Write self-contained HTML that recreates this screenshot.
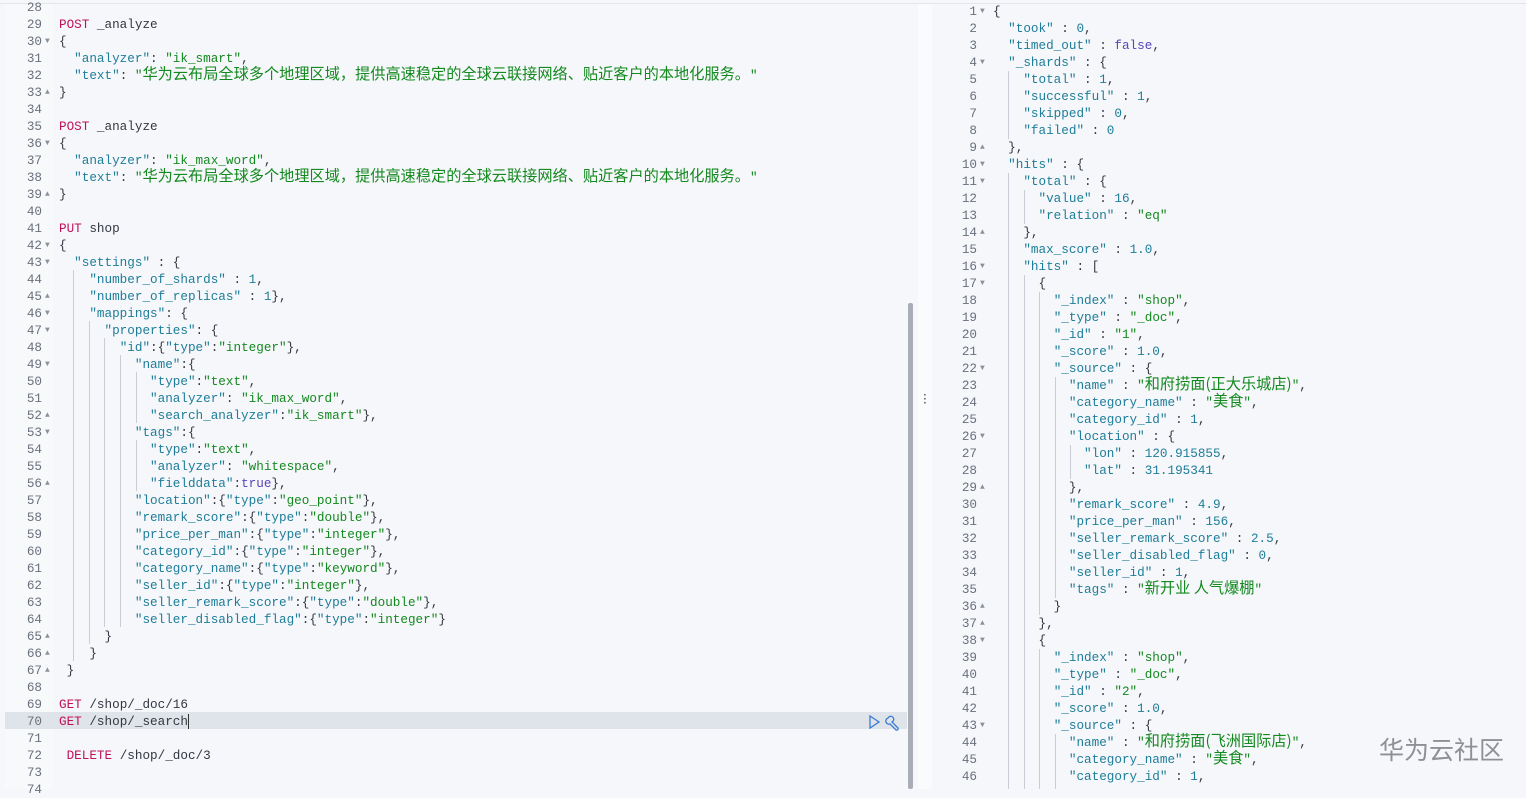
<!DOCTYPE html>
<html><head><meta charset="utf-8"><style>
body{margin:0;width:1526px;height:789px;background:#f5f7fa;overflow:hidden;position:relative;font-family:"Liberation Mono","Noto Sans CJK SC",monospace;font-size:12.65px;color:#343741}
.topline{position:absolute;left:0;top:3px;width:1526px;height:1px;background:#e3e6eb}
.pane{position:absolute;top:4px;bottom:0;background:#f5f7fa}
.l{position:absolute;height:17px;line-height:17px;white-space:pre;left:0;overflow:visible}
.n{position:absolute;width:42px;text-align:right;color:#69707d;height:17px;line-height:17px}
.f{position:absolute;color:#8a919c;font-size:8px;height:17px;line-height:17px}
.k{color:#1e7d99}.s{color:#14891f}.m{color:#c0125a}.v{color:#1e7d99}.b{color:#5a45b8}
.c{font-family:"Noto Sans CJK SC",sans-serif;font-size:15.2px;line-height:1px;vertical-align:baseline}
.g{position:absolute;width:1px;background:#c9ced6}
</style></head><body>
<div class="topline"></div>
<div class="pane" style="left:5px;width:913px;background:#f5f7fa"></div>
<div style="position:absolute;left:5px;top:4px;width:48px;bottom:0;background:#f8f9fb"></div>
<div style="position:absolute;left:5px;top:712px;width:902px;height:17px;background:#dfe4ea"></div>
<div style="position:absolute;left:908px;top:303px;width:5px;bottom:0;background:#a9aeb6;border-radius:2px"></div>
<div style="position:absolute;left:918px;top:4px;width:14px;bottom:0;background:#fafbfc"></div>
<div style="position:absolute;left:923px;top:393px;color:#343741;font-size:12px;line-height:4px;font-family:'DejaVu Sans'">·<br>·<br>·</div>
<div class="g" style="left:73px;top:270px;height:391px"></div>
<div class="g" style="left:89px;top:321px;height:323px"></div>
<div class="g" style="left:104px;top:338px;height:289px"></div>
<div class="g" style="left:120px;top:355px;height:272px"></div>
<div class="g" style="left:136px;top:372px;height:51px"></div>
<div class="g" style="left:136px;top:440px;height:51px"></div>
<div class="g" style="left:1008px;top:71px;height:68px"></div>
<div class="g" style="left:1008px;top:173px;height:616px"></div>
<div class="g" style="left:1024px;top:190px;height:34px"></div>
<div class="g" style="left:1024px;top:275px;height:514px"></div>
<div class="g" style="left:1039px;top:292px;height:323px"></div>
<div class="g" style="left:1039px;top:649px;height:140px"></div>
<div class="g" style="left:1055px;top:377px;height:221px"></div>
<div class="g" style="left:1055px;top:734px;height:55px"></div>
<div class="g" style="left:1070px;top:445px;height:34px"></div>

<div id="L" style="position:absolute;left:0;top:-1px">
<div class="n" style="top:0">28</div>
<div class="n" style="top:17px">29</div><div class="l" style="left:59px;top:17px"><span class="m">POST</span> _analyze</div>
<div class="n" style="top:34px">30</div><div class="f" style="left:45px;top:34px">▼</div><div class="l" style="left:59px;top:34px">{</div>
<div class="n" style="top:51px">31</div><div class="l" style="left:59px;top:51px">  <span class="k">"analyzer"</span>: <span class="s">"ik_smart"</span>,</div>
<div class="n" style="top:68px">32</div><div class="l" style="left:59px;top:68px">  <span class="k">"text"</span>: <span class="s">"<span class="c">华为云布局全球多个地理区域，提供高速稳定的全球云联接网络、贴近客户的本地化服务。</span>"</span></div>
<div class="n" style="top:85px">33</div><div class="f" style="left:45px;top:85px">▲</div><div class="l" style="left:59px;top:85px">}</div>
<div class="n" style="top:102px">34</div>
<div class="n" style="top:119px">35</div><div class="l" style="left:59px;top:119px"><span class="m">POST</span> _analyze</div>
<div class="n" style="top:136px">36</div><div class="f" style="left:45px;top:136px">▼</div><div class="l" style="left:59px;top:136px">{</div>
<div class="n" style="top:153px">37</div><div class="l" style="left:59px;top:153px">  <span class="k">"analyzer"</span>: <span class="s">"ik_max_word"</span>,</div>
<div class="n" style="top:170px">38</div><div class="l" style="left:59px;top:170px">  <span class="k">"text"</span>: <span class="s">"<span class="c">华为云布局全球多个地理区域，提供高速稳定的全球云联接网络、贴近客户的本地化服务。</span>"</span></div>
<div class="n" style="top:187px">39</div><div class="f" style="left:45px;top:187px">▲</div><div class="l" style="left:59px;top:187px">}</div>
<div class="n" style="top:204px">40</div>
<div class="n" style="top:221px">41</div><div class="l" style="left:59px;top:221px"><span class="m">PUT</span> shop</div>
<div class="n" style="top:238px">42</div><div class="f" style="left:45px;top:238px">▼</div><div class="l" style="left:59px;top:238px">{</div>
<div class="n" style="top:255px">43</div><div class="f" style="left:45px;top:255px">▼</div><div class="l" style="left:59px;top:255px">  <span class="k">"settings"</span> : {</div>
<div class="n" style="top:272px">44</div><div class="l" style="left:59px;top:272px">    <span class="k">"number_of_shards"</span> : <span class="v">1</span>,</div>
<div class="n" style="top:289px">45</div><div class="f" style="left:45px;top:289px">▲</div><div class="l" style="left:59px;top:289px">    <span class="k">"number_of_replicas"</span> : <span class="v">1</span>},</div>
<div class="n" style="top:306px">46</div><div class="f" style="left:45px;top:306px">▼</div><div class="l" style="left:59px;top:306px">    <span class="k">"mappings"</span>: {</div>
<div class="n" style="top:323px">47</div><div class="f" style="left:45px;top:323px">▼</div><div class="l" style="left:59px;top:323px">      <span class="k">"properties"</span>: {</div>
<div class="n" style="top:340px">48</div><div class="l" style="left:59px;top:340px">        <span class="k">"id"</span>:{<span class="k">"type"</span>:<span class="s">"integer"</span>},</div>
<div class="n" style="top:357px">49</div><div class="f" style="left:45px;top:357px">▼</div><div class="l" style="left:59px;top:357px">          <span class="k">"name"</span>:{</div>
<div class="n" style="top:374px">50</div><div class="l" style="left:59px;top:374px">            <span class="k">"type"</span>:<span class="s">"text"</span>,</div>
<div class="n" style="top:391px">51</div><div class="l" style="left:59px;top:391px">            <span class="k">"analyzer"</span>: <span class="s">"ik_max_word"</span>,</div>
<div class="n" style="top:408px">52</div><div class="f" style="left:45px;top:408px">▲</div><div class="l" style="left:59px;top:408px">            <span class="k">"search_analyzer"</span>:<span class="s">"ik_smart"</span>},</div>
<div class="n" style="top:425px">53</div><div class="f" style="left:45px;top:425px">▼</div><div class="l" style="left:59px;top:425px">          <span class="k">"tags"</span>:{</div>
<div class="n" style="top:442px">54</div><div class="l" style="left:59px;top:442px">            <span class="k">"type"</span>:<span class="s">"text"</span>,</div>
<div class="n" style="top:459px">55</div><div class="l" style="left:59px;top:459px">            <span class="k">"analyzer"</span>: <span class="s">"whitespace"</span>,</div>
<div class="n" style="top:476px">56</div><div class="f" style="left:45px;top:476px">▲</div><div class="l" style="left:59px;top:476px">            <span class="k">"fielddata"</span>:<span class="b">true</span>},</div>
<div class="n" style="top:493px">57</div><div class="l" style="left:59px;top:493px">          <span class="k">"location"</span>:{<span class="k">"type"</span>:<span class="s">"geo_point"</span>},</div>
<div class="n" style="top:510px">58</div><div class="l" style="left:59px;top:510px">          <span class="k">"remark_score"</span>:{<span class="k">"type"</span>:<span class="s">"double"</span>},</div>
<div class="n" style="top:527px">59</div><div class="l" style="left:59px;top:527px">          <span class="k">"price_per_man"</span>:{<span class="k">"type"</span>:<span class="s">"integer"</span>},</div>
<div class="n" style="top:544px">60</div><div class="l" style="left:59px;top:544px">          <span class="k">"category_id"</span>:{<span class="k">"type"</span>:<span class="s">"integer"</span>},</div>
<div class="n" style="top:561px">61</div><div class="l" style="left:59px;top:561px">          <span class="k">"category_name"</span>:{<span class="k">"type"</span>:<span class="s">"keyword"</span>},</div>
<div class="n" style="top:578px">62</div><div class="l" style="left:59px;top:578px">          <span class="k">"seller_id"</span>:{<span class="k">"type"</span>:<span class="s">"integer"</span>},</div>
<div class="n" style="top:595px">63</div><div class="l" style="left:59px;top:595px">          <span class="k">"seller_remark_score"</span>:{<span class="k">"type"</span>:<span class="s">"double"</span>},</div>
<div class="n" style="top:612px">64</div><div class="l" style="left:59px;top:612px">          <span class="k">"seller_disabled_flag"</span>:{<span class="k">"type"</span>:<span class="s">"integer"</span>}</div>
<div class="n" style="top:629px">65</div><div class="f" style="left:45px;top:629px">▲</div><div class="l" style="left:59px;top:629px">      }</div>
<div class="n" style="top:646px">66</div><div class="f" style="left:45px;top:646px">▲</div><div class="l" style="left:59px;top:646px">    }</div>
<div class="n" style="top:663px">67</div><div class="f" style="left:45px;top:663px">▲</div><div class="l" style="left:59px;top:663px"> }</div>
<div class="n" style="top:680px">68</div>
<div class="n" style="top:697px">69</div><div class="l" style="left:59px;top:697px"><span class="m">GET</span> /shop/_doc/16</div>
<div class="n" style="top:714px">70</div><div class="l" style="left:59px;top:714px"><span class="m">GET</span> /shop/_search<span style="border-left:1px solid #333"></span></div>
<div class="n" style="top:731px">71</div>
<div class="n" style="top:748px">72</div><div class="l" style="left:59px;top:748px"> <span class="m">DELETE</span> /shop/_doc/3</div>
<div class="n" style="top:765px">73</div>
<div class="n" style="top:782px">74</div>
</div>
<svg style="position:absolute;left:867px;top:714px" width="38" height="17" viewBox="0 0 38 17"><path d="M3 2 L12 8 L3 14 Z" fill="none" stroke="#3a7bd5" stroke-width="1.3"/><path d="M21 4 a3 3 0 1 1 4 4 l6 6 a1.5 1.5 0 0 1 -2 2 l-6 -6 a3 3 0 0 1 -2 -6z" fill="none" stroke="#3a7bd5" stroke-width="1.3"/></svg>

<div id="R" style="position:absolute;left:935px;top:3px">
<div class="n" style="top:0">1</div><div class="f" style="left:45px;top:0">▼</div><div class="l" style="left:58px;top:0">{</div>
<div class="n" style="top:17px">2</div><div class="l" style="left:58px;top:17px">  <span class="k">"took"</span> : <span class="v">0</span>,</div>
<div class="n" style="top:34px">3</div><div class="l" style="left:58px;top:34px">  <span class="k">"timed_out"</span> : <span class="b">false</span>,</div>
<div class="n" style="top:51px">4</div><div class="f" style="left:45px;top:51px">▼</div><div class="l" style="left:58px;top:51px">  <span class="k">"_shards"</span> : {</div>
<div class="n" style="top:68px">5</div><div class="l" style="left:58px;top:68px">    <span class="k">"total"</span> : <span class="v">1</span>,</div>
<div class="n" style="top:85px">6</div><div class="l" style="left:58px;top:85px">    <span class="k">"successful"</span> : <span class="v">1</span>,</div>
<div class="n" style="top:102px">7</div><div class="l" style="left:58px;top:102px">    <span class="k">"skipped"</span> : <span class="v">0</span>,</div>
<div class="n" style="top:119px">8</div><div class="l" style="left:58px;top:119px">    <span class="k">"failed"</span> : <span class="v">0</span></div>
<div class="n" style="top:136px">9</div><div class="f" style="left:45px;top:136px">▲</div><div class="l" style="left:58px;top:136px">  },</div>
<div class="n" style="top:153px">10</div><div class="f" style="left:45px;top:153px">▼</div><div class="l" style="left:58px;top:153px">  <span class="k">"hits"</span> : {</div>
<div class="n" style="top:170px">11</div><div class="f" style="left:45px;top:170px">▼</div><div class="l" style="left:58px;top:170px">    <span class="k">"total"</span> : {</div>
<div class="n" style="top:187px">12</div><div class="l" style="left:58px;top:187px">      <span class="k">"value"</span> : <span class="v">16</span>,</div>
<div class="n" style="top:204px">13</div><div class="l" style="left:58px;top:204px">      <span class="k">"relation"</span> : <span class="s">"eq"</span></div>
<div class="n" style="top:221px">14</div><div class="f" style="left:45px;top:221px">▲</div><div class="l" style="left:58px;top:221px">    },</div>
<div class="n" style="top:238px">15</div><div class="l" style="left:58px;top:238px">    <span class="k">"max_score"</span> : <span class="v">1.0</span>,</div>
<div class="n" style="top:255px">16</div><div class="f" style="left:45px;top:255px">▼</div><div class="l" style="left:58px;top:255px">    <span class="k">"hits"</span> : [</div>
<div class="n" style="top:272px">17</div><div class="f" style="left:45px;top:272px">▼</div><div class="l" style="left:58px;top:272px">      {</div>
<div class="n" style="top:289px">18</div><div class="l" style="left:58px;top:289px">        <span class="k">"_index"</span> : <span class="s">"shop"</span>,</div>
<div class="n" style="top:306px">19</div><div class="l" style="left:58px;top:306px">        <span class="k">"_type"</span> : <span class="s">"_doc"</span>,</div>
<div class="n" style="top:323px">20</div><div class="l" style="left:58px;top:323px">        <span class="k">"_id"</span> : <span class="s">"1"</span>,</div>
<div class="n" style="top:340px">21</div><div class="l" style="left:58px;top:340px">        <span class="k">"_score"</span> : <span class="v">1.0</span>,</div>
<div class="n" style="top:357px">22</div><div class="f" style="left:45px;top:357px">▼</div><div class="l" style="left:58px;top:357px">        <span class="k">"_source"</span> : {</div>
<div class="n" style="top:374px">23</div><div class="l" style="left:58px;top:374px">          <span class="k">"name"</span> : <span class="s">"<span class="c">和府捞面(正大乐城店)</span>"</span>,</div>
<div class="n" style="top:391px">24</div><div class="l" style="left:58px;top:391px">          <span class="k">"category_name"</span> : <span class="s">"<span class="c">美食</span>"</span>,</div>
<div class="n" style="top:408px">25</div><div class="l" style="left:58px;top:408px">          <span class="k">"category_id"</span> : <span class="v">1</span>,</div>
<div class="n" style="top:425px">26</div><div class="f" style="left:45px;top:425px">▼</div><div class="l" style="left:58px;top:425px">          <span class="k">"location"</span> : {</div>
<div class="n" style="top:442px">27</div><div class="l" style="left:58px;top:442px">            <span class="k">"lon"</span> : <span class="v">120.915855</span>,</div>
<div class="n" style="top:459px">28</div><div class="l" style="left:58px;top:459px">            <span class="k">"lat"</span> : <span class="v">31.195341</span></div>
<div class="n" style="top:476px">29</div><div class="f" style="left:45px;top:476px">▲</div><div class="l" style="left:58px;top:476px">          },</div>
<div class="n" style="top:493px">30</div><div class="l" style="left:58px;top:493px">          <span class="k">"remark_score"</span> : <span class="v">4.9</span>,</div>
<div class="n" style="top:510px">31</div><div class="l" style="left:58px;top:510px">          <span class="k">"price_per_man"</span> : <span class="v">156</span>,</div>
<div class="n" style="top:527px">32</div><div class="l" style="left:58px;top:527px">          <span class="k">"seller_remark_score"</span> : <span class="v">2.5</span>,</div>
<div class="n" style="top:544px">33</div><div class="l" style="left:58px;top:544px">          <span class="k">"seller_disabled_flag"</span> : <span class="v">0</span>,</div>
<div class="n" style="top:561px">34</div><div class="l" style="left:58px;top:561px">          <span class="k">"seller_id"</span> : <span class="v">1</span>,</div>
<div class="n" style="top:578px">35</div><div class="l" style="left:58px;top:578px">          <span class="k">"tags"</span> : <span class="s">"<span class="c">新开业 人气爆棚</span>"</span></div>
<div class="n" style="top:595px">36</div><div class="f" style="left:45px;top:595px">▲</div><div class="l" style="left:58px;top:595px">        }</div>
<div class="n" style="top:612px">37</div><div class="f" style="left:45px;top:612px">▲</div><div class="l" style="left:58px;top:612px">      },</div>
<div class="n" style="top:629px">38</div><div class="f" style="left:45px;top:629px">▼</div><div class="l" style="left:58px;top:629px">      {</div>
<div class="n" style="top:646px">39</div><div class="l" style="left:58px;top:646px">        <span class="k">"_index"</span> : <span class="s">"shop"</span>,</div>
<div class="n" style="top:663px">40</div><div class="l" style="left:58px;top:663px">        <span class="k">"_type"</span> : <span class="s">"_doc"</span>,</div>
<div class="n" style="top:680px">41</div><div class="l" style="left:58px;top:680px">        <span class="k">"_id"</span> : <span class="s">"2"</span>,</div>
<div class="n" style="top:697px">42</div><div class="l" style="left:58px;top:697px">        <span class="k">"_score"</span> : <span class="v">1.0</span>,</div>
<div class="n" style="top:714px">43</div><div class="f" style="left:45px;top:714px">▼</div><div class="l" style="left:58px;top:714px">        <span class="k">"_source"</span> : {</div>
<div class="n" style="top:731px">44</div><div class="l" style="left:58px;top:731px">          <span class="k">"name"</span> : <span class="s">"<span class="c">和府捞面(飞洲国际店)</span>"</span>,</div>
<div class="n" style="top:748px">45</div><div class="l" style="left:58px;top:748px">          <span class="k">"category_name"</span> : <span class="s">"<span class="c">美食</span>"</span>,</div>
<div class="n" style="top:765px">46</div><div class="l" style="left:58px;top:765px">          <span class="k">"category_id"</span> : <span class="v">1</span>,</div>
</div>
<div style="position:absolute;left:1379px;top:731px;font-family:'Noto Sans CJK SC',sans-serif;font-size:25px;color:#8e9096">华为云社区</div>
</body></html>
